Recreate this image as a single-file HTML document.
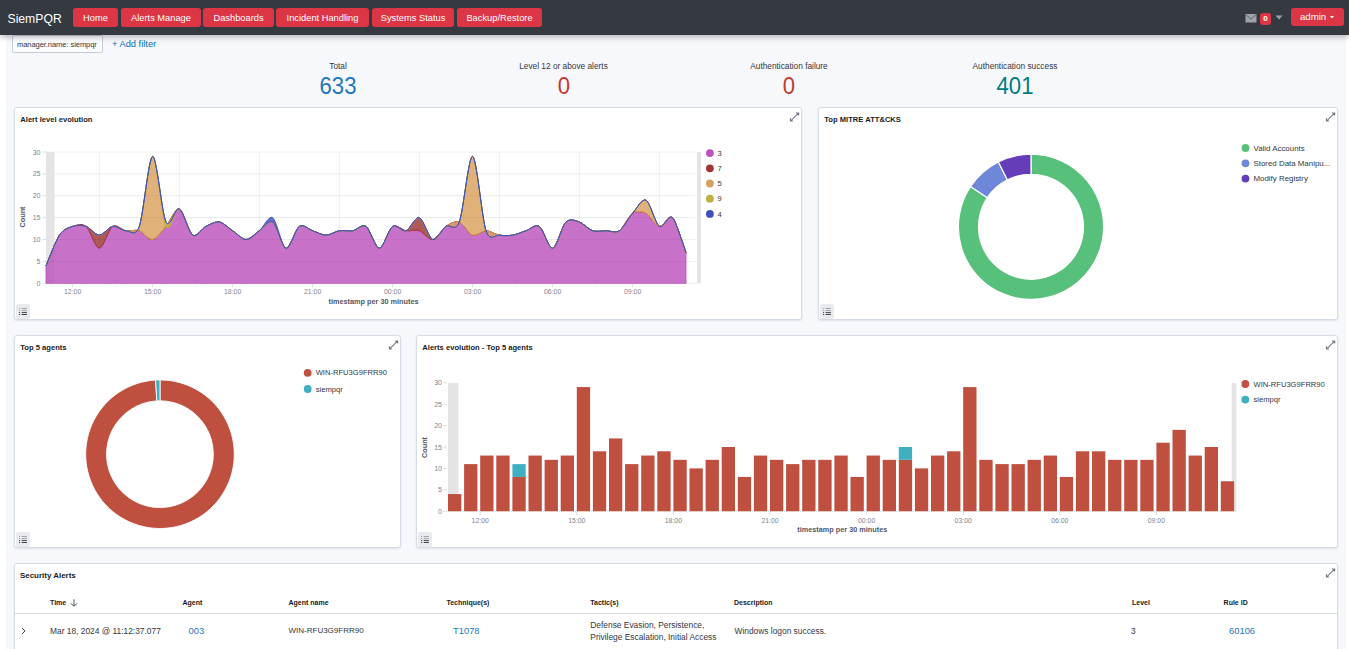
<!DOCTYPE html>
<html><head><meta charset="utf-8"><title>SiemPQR</title>
<style>
*{box-sizing:border-box;margin:0;padding:0}
html,body{width:1349px;height:649px;overflow:hidden;background:#fff;font-family:"Liberation Sans", sans-serif}
.abs{position:absolute}
.t{position:absolute;white-space:nowrap;line-height:1}
.nav{position:absolute;left:0;top:0;width:1349px;height:35px;background:#343a40;box-shadow:0 2px 6px rgba(0,0,0,.28);z-index:5}
.btn{position:absolute;top:8px;height:19px;background:#dc3545;border-radius:3px;color:#fff;font-size:9.3px;line-height:20.5px;text-align:center}
.page{position:absolute;left:6px;top:35px;width:1340px;height:614px;background:#f7f8fb}
.panel{position:absolute;background:#fff;border:1px solid #d6dce6;border-radius:3px;box-shadow:0 1px 2px rgba(152,162,179,.25)}
.ptitle{position:absolute;left:5.3px;top:8px;font-weight:bold;font-size:7.6px;color:#1a1c21;line-height:1;white-space:nowrap}
.tog{position:absolute;left:0.8px;bottom:0.5px;width:14.6px;height:14.6px;background:#e9eaed;border-radius:2.5px}
.lg{position:absolute;font-size:7.4px;color:#343741;line-height:1;white-space:nowrap}
.dot{position:absolute;width:8px;height:8px;border-radius:50%}
</style></head><body>

<div class="page"></div>
<div class="nav">
<div class="t" style="left:7.5px;top:12.5px;font-size:12.2px;color:#fff">SiemPQR</div>
<div class="btn" style="left:73px;width:45px">Home</div>
<div class="btn" style="left:121px;width:80px">Alerts Manage</div>
<div class="btn" style="left:203px;width:71px">Dashboards</div>
<div class="btn" style="left:276px;width:93px">Incident Handling</div>
<div class="btn" style="left:372px;width:82px">Systems Status</div>
<div class="btn" style="left:457px;width:85px">Backup/Restore</div>
<svg class="abs" style="left:1245px;top:13px" width="13" height="11" viewBox="0 0 13 11"><rect x="0.5" y="1" width="11" height="8.5" fill="#9ba1a8"/><path d="M0.5 1.5 L6 6 L11.5 1.5" stroke="#5d636b" stroke-width="0.9" fill="none"/></svg>
<div class="abs" style="left:1260px;top:13px;width:11px;height:12px;background:#dc3545;border-radius:3px;color:#fff;font-size:8px;font-weight:bold;line-height:12px;text-align:center">0</div>
<svg class="abs" style="left:1275px;top:15px" width="8" height="5" viewBox="0 0 8 5"><path d="M0.5 0.5 L7.5 0.5 L4 4.5 Z" fill="#9ba1a8"/></svg>
<div class="abs" style="left:1291px;top:8px;width:53px;height:18px;background:#dc3545;border-radius:3px;color:#fff;font-size:9.6px;line-height:18px;padding-left:9px">admin<svg style="position:absolute;left:38.5px;top:7.5px" width="4" height="2.5" viewBox="0 0 5 3"><path d="M0 0 L5 0 L2.5 3 Z" fill="#fff"/></svg></div>
</div>
<div class="abs" style="left:12px;top:35px;width:91px;height:18px;background:#fbfcfd;border:1px solid #c5ccd6;border-radius:2px"></div>
<div class="t" style="left:17px;top:40.5px;font-size:7.6px;color:#343741;letter-spacing:-0.1px">manager.name: siempqr</div>
<div class="t" style="left:112px;top:40.2px;font-size:9.3px;color:#0b6fb8">+ Add filter</div>
<div class="t" style="left:338px;top:62px;width:200px;margin-left:-100px;text-align:center;font-size:8.3px;color:#343741">Total</div>
<div class="t" style="left:338px;top:74px;width:200px;margin-left:-100px;text-align:center;font-size:23.8px;transform:scaleX(0.93);color:#1f76c0">633</div>
<div class="t" style="left:563.5px;top:62px;width:200px;margin-left:-100px;text-align:center;font-size:8.3px;color:#343741">Level 12 or above alerts</div>
<div class="t" style="left:563.5px;top:74px;width:200px;margin-left:-100px;text-align:center;font-size:23.8px;transform:scaleX(0.93);color:#c13b2e">0</div>
<div class="t" style="left:789px;top:62px;width:200px;margin-left:-100px;text-align:center;font-size:8.3px;color:#343741">Authentication failure</div>
<div class="t" style="left:789px;top:74px;width:200px;margin-left:-100px;text-align:center;font-size:23.8px;transform:scaleX(0.93);color:#c13b2e">0</div>
<div class="t" style="left:1015px;top:62px;width:200px;margin-left:-100px;text-align:center;font-size:8.3px;color:#343741">Authentication success</div>
<div class="t" style="left:1015px;top:74px;width:200px;margin-left:-100px;text-align:center;font-size:23.8px;transform:scaleX(0.93);color:#017d80">401</div>
<div class="panel" style="left:14px;top:107px;width:788px;height:213px">
<div class="ptitle">Alert level evolution</div>
<div class="tog"><svg class="abs" style="left:3px;top:4px" width="9" height="8" viewBox="0 0 9 8"><path d="M0 .5h1.1M2.7 .5h5.2M0 2.6h1.1M2.7 2.6h5.2" stroke="#9a9ea6" stroke-width="0.95"/><path d="M0 4.6h1.1M2.7 4.6h5.2M0 6.5h1.1M2.7 6.5h5.2" stroke="#3a3d44" stroke-width="0.95"/></svg></div>
</div>
<svg class="abs" style="left:789px;top:112px" width="11" height="11" viewBox="0 0 11 11"><path d="M2.2 8.4 L9.2 1.4 M7 0.9 L9.7 0.9 L9.7 3.6 M1.4 6.2 L1.4 9 L4 9" stroke="#747a84" stroke-width="1.05" fill="none"/></svg>
<div class="panel" style="left:818px;top:107px;width:520px;height:213px">
<div class="ptitle">Top MITRE ATT&amp;CKS</div>
<div class="tog"><svg class="abs" style="left:3px;top:4px" width="9" height="8" viewBox="0 0 9 8"><path d="M0 .5h1.1M2.7 .5h5.2M0 2.6h1.1M2.7 2.6h5.2" stroke="#9a9ea6" stroke-width="0.95"/><path d="M0 4.6h1.1M2.7 4.6h5.2M0 6.5h1.1M2.7 6.5h5.2" stroke="#3a3d44" stroke-width="0.95"/></svg></div>
</div>
<svg class="abs" style="left:1325px;top:112px" width="11" height="11" viewBox="0 0 11 11"><path d="M2.2 8.4 L9.2 1.4 M7 0.9 L9.7 0.9 L9.7 3.6 M1.4 6.2 L1.4 9 L4 9" stroke="#747a84" stroke-width="1.05" fill="none"/></svg>
<div class="panel" style="left:14px;top:335px;width:387px;height:213px">
<div class="ptitle">Top 5 agents</div>
<div class="tog"><svg class="abs" style="left:3px;top:4px" width="9" height="8" viewBox="0 0 9 8"><path d="M0 .5h1.1M2.7 .5h5.2M0 2.6h1.1M2.7 2.6h5.2" stroke="#9a9ea6" stroke-width="0.95"/><path d="M0 4.6h1.1M2.7 4.6h5.2M0 6.5h1.1M2.7 6.5h5.2" stroke="#3a3d44" stroke-width="0.95"/></svg></div>
</div>
<svg class="abs" style="left:388px;top:340px" width="11" height="11" viewBox="0 0 11 11"><path d="M2.2 8.4 L9.2 1.4 M7 0.9 L9.7 0.9 L9.7 3.6 M1.4 6.2 L1.4 9 L4 9" stroke="#747a84" stroke-width="1.05" fill="none"/></svg>
<div class="panel" style="left:416px;top:335px;width:922px;height:213px">
<div class="ptitle">Alerts evolution - Top 5 agents</div>
<div class="tog"><svg class="abs" style="left:3px;top:4px" width="9" height="8" viewBox="0 0 9 8"><path d="M0 .5h1.1M2.7 .5h5.2M0 2.6h1.1M2.7 2.6h5.2" stroke="#9a9ea6" stroke-width="0.95"/><path d="M0 4.6h1.1M2.7 4.6h5.2M0 6.5h1.1M2.7 6.5h5.2" stroke="#3a3d44" stroke-width="0.95"/></svg></div>
</div>
<svg class="abs" style="left:1325px;top:340px" width="11" height="11" viewBox="0 0 11 11"><path d="M2.2 8.4 L9.2 1.4 M7 0.9 L9.7 0.9 L9.7 3.6 M1.4 6.2 L1.4 9 L4 9" stroke="#747a84" stroke-width="1.05" fill="none"/></svg>
<div class="panel" style="left:14px;top:563px;width:1324px;height:110px">
<div class="ptitle" style="top:8.3px;left:5px;font-size:7.95px">Security Alerts</div>
<div class="abs" style="left:0;top:48.8px;width:1322px;height:1px;background:#d6dce6"></div>
</div>
<svg class="abs" style="left:1325px;top:568px" width="11" height="11" viewBox="0 0 11 11"><path d="M2.2 8.4 L9.2 1.4 M7 0.9 L9.7 0.9 L9.7 3.6 M1.4 6.2 L1.4 9 L4 9" stroke="#747a84" stroke-width="1.05" fill="none"/></svg>
<div class="t" style="left:50px;top:599px;font-size:7px;font-weight:bold;color:#1a1c21">Time</div>
<div class="t" style="left:182.5px;top:599px;font-size:7px;font-weight:bold;color:#1a1c21">Agent</div>
<div class="t" style="left:288.5px;top:599px;font-size:7px;font-weight:bold;color:#1a1c21">Agent name</div>
<div class="t" style="left:446.4px;top:599px;font-size:7px;font-weight:bold;color:#1a1c21">Technique(s)</div>
<div class="t" style="left:590.3px;top:599px;font-size:7px;font-weight:bold;color:#1a1c21">Tactic(s)</div>
<div class="t" style="left:734px;top:599px;font-size:7px;font-weight:bold;color:#1a1c21">Description</div>
<div class="t" style="left:1132px;top:599px;font-size:7px;font-weight:bold;color:#1a1c21">Level</div>
<div class="t" style="left:1223.6px;top:599px;font-size:7px;font-weight:bold;color:#1a1c21">Rule ID</div>
<svg class="abs" style="left:70px;top:598px" width="8" height="9" viewBox="0 0 8 9"><path d="M4 1.3V8M0.7 5.3L4 8.2L7.3 5.3" stroke="#4a4d55" stroke-width="0.95" fill="none"/></svg>
<svg class="abs" style="left:21px;top:627px" width="5" height="8" viewBox="0 0 5 8"><path d="M1 1L4 4L1 7" stroke="#343741" stroke-width="0.9" fill="none"/></svg>
<div class="t" style="left:50px;top:627px;font-size:8.4px;color:#343741">Mar 18, 2024 @ 11:12:37.077</div>
<div class="t" style="left:188.5px;top:626px;font-size:9.4px;color:#1f76c0">003</div>
<div class="t" style="left:288.5px;top:627px;font-size:8px;color:#343741">WIN-RFU3G9FRR90</div>
<div class="t" style="left:453px;top:626px;font-size:9.4px;color:#1f76c0">T1078</div>
<div class="t" style="left:590.3px;top:621px;font-size:8.4px;color:#343741">Defense Evasion, Persistence,</div>
<div class="t" style="left:590.3px;top:633px;font-size:8.4px;color:#343741">Privilege Escalation, Initial Access</div>
<div class="t" style="left:734.5px;top:627px;font-size:8.4px;color:#343741">Windows logon success.</div>
<div class="t" style="left:1131px;top:627px;font-size:8.4px;color:#343741">3</div>
<div class="t" style="left:1229px;top:626px;font-size:9.4px;color:#1f76c0">60106</div>
<svg class="abs" style="left:0;top:0" width="1349" height="649" viewBox="0 0 1349 649"><rect x="46" y="152" width="8.6" height="131.3" fill="#e4e4e4"/><rect x="697" y="152" width="4" height="131.3" fill="#e4e4e4"/><line x1="46" x2="697" y1="283.3" y2="283.3" stroke="#ececec" stroke-width="0.8"/><line x1="42.5" x2="46" y1="283.3" y2="283.3" stroke="#d0d0d0" stroke-width="0.7"/><text x="40.5" y="285.8" font-size="7" fill="#7d8491" text-anchor="end" font-family='"Liberation Sans", sans-serif'>0</text><line x1="46" x2="697" y1="261.42" y2="261.42" stroke="#ececec" stroke-width="0.8"/><line x1="42.5" x2="46" y1="261.42" y2="261.42" stroke="#d0d0d0" stroke-width="0.7"/><text x="40.5" y="263.92" font-size="7" fill="#7d8491" text-anchor="end" font-family='"Liberation Sans", sans-serif'>5</text><line x1="46" x2="697" y1="239.53" y2="239.53" stroke="#ececec" stroke-width="0.8"/><line x1="42.5" x2="46" y1="239.53" y2="239.53" stroke="#d0d0d0" stroke-width="0.7"/><text x="40.5" y="242.03" font-size="7" fill="#7d8491" text-anchor="end" font-family='"Liberation Sans", sans-serif'>10</text><line x1="46" x2="697" y1="217.65" y2="217.65" stroke="#ececec" stroke-width="0.8"/><line x1="42.5" x2="46" y1="217.65" y2="217.65" stroke="#d0d0d0" stroke-width="0.7"/><text x="40.5" y="220.15" font-size="7" fill="#7d8491" text-anchor="end" font-family='"Liberation Sans", sans-serif'>15</text><line x1="46" x2="697" y1="195.77" y2="195.77" stroke="#ececec" stroke-width="0.8"/><line x1="42.5" x2="46" y1="195.77" y2="195.77" stroke="#d0d0d0" stroke-width="0.7"/><text x="40.5" y="198.27" font-size="7" fill="#7d8491" text-anchor="end" font-family='"Liberation Sans", sans-serif'>20</text><line x1="46" x2="697" y1="173.88" y2="173.88" stroke="#ececec" stroke-width="0.8"/><line x1="42.5" x2="46" y1="173.88" y2="173.88" stroke="#d0d0d0" stroke-width="0.7"/><text x="40.5" y="176.38" font-size="7" fill="#7d8491" text-anchor="end" font-family='"Liberation Sans", sans-serif'>25</text><line x1="46" x2="697" y1="152" y2="152" stroke="#ececec" stroke-width="0.8"/><line x1="42.5" x2="46" y1="152" y2="152" stroke="#d0d0d0" stroke-width="0.7"/><text x="40.5" y="154.5" font-size="7" fill="#7d8491" text-anchor="end" font-family='"Liberation Sans", sans-serif'>30</text><line x1="99.33" x2="99.33" y1="152" y2="283.3" stroke="#ececec" stroke-width="0.8"/><line x1="179.33" x2="179.33" y1="152" y2="283.3" stroke="#ececec" stroke-width="0.8"/><line x1="259.33" x2="259.33" y1="152" y2="283.3" stroke="#ececec" stroke-width="0.8"/><line x1="339.33" x2="339.33" y1="152" y2="283.3" stroke="#ececec" stroke-width="0.8"/><line x1="419.32" x2="419.32" y1="152" y2="283.3" stroke="#ececec" stroke-width="0.8"/><line x1="499.32" x2="499.32" y1="152" y2="283.3" stroke="#ececec" stroke-width="0.8"/><line x1="579.32" x2="579.32" y1="152" y2="283.3" stroke="#ececec" stroke-width="0.8"/><line x1="659.32" x2="659.32" y1="152" y2="283.3" stroke="#ececec" stroke-width="0.8"/><line x1="72.67" x2="72.67" y1="283.5" y2="287.5" stroke="#d0d0d0" stroke-width="0.7"/><text x="72.67" y="294" font-size="6.9" fill="#7d8491" text-anchor="middle" font-family='"Liberation Sans", sans-serif'>12:00</text><line x1="152.66" x2="152.66" y1="283.5" y2="287.5" stroke="#d0d0d0" stroke-width="0.7"/><text x="152.66" y="294" font-size="6.9" fill="#7d8491" text-anchor="middle" font-family='"Liberation Sans", sans-serif'>15:00</text><line x1="232.66" x2="232.66" y1="283.5" y2="287.5" stroke="#d0d0d0" stroke-width="0.7"/><text x="232.66" y="294" font-size="6.9" fill="#7d8491" text-anchor="middle" font-family='"Liberation Sans", sans-serif'>18:00</text><line x1="312.66" x2="312.66" y1="283.5" y2="287.5" stroke="#d0d0d0" stroke-width="0.7"/><text x="312.66" y="294" font-size="6.9" fill="#7d8491" text-anchor="middle" font-family='"Liberation Sans", sans-serif'>21:00</text><line x1="392.66" x2="392.66" y1="283.5" y2="287.5" stroke="#d0d0d0" stroke-width="0.7"/><text x="392.66" y="294" font-size="6.9" fill="#7d8491" text-anchor="middle" font-family='"Liberation Sans", sans-serif'>00:00</text><line x1="472.66" x2="472.66" y1="283.5" y2="287.5" stroke="#d0d0d0" stroke-width="0.7"/><text x="472.66" y="294" font-size="6.9" fill="#7d8491" text-anchor="middle" font-family='"Liberation Sans", sans-serif'>03:00</text><line x1="552.65" x2="552.65" y1="283.5" y2="287.5" stroke="#d0d0d0" stroke-width="0.7"/><text x="552.65" y="294" font-size="6.9" fill="#7d8491" text-anchor="middle" font-family='"Liberation Sans", sans-serif'>06:00</text><line x1="632.65" x2="632.65" y1="283.5" y2="287.5" stroke="#d0d0d0" stroke-width="0.7"/><text x="632.65" y="294" font-size="6.9" fill="#7d8491" text-anchor="middle" font-family='"Liberation Sans", sans-serif'>09:00</text><text x="373.5" y="304.3" font-size="7.3" font-weight="bold" fill="#535966" text-anchor="middle" font-family='"Liberation Sans", sans-serif'>timestamp per 30 minutes</text><text transform="translate(25,217) rotate(-90)" font-size="7.3" font-weight="bold" fill="#535966" text-anchor="middle" font-family='"Liberation Sans", sans-serif'>Count</text><path d="M46,265.79Q56.67,239.1,59.33,235.16C63.33,229.25,68.67,227.72,72.67,226.4S82,223.12,86,226.4S95.33,248.29,99.33,248.29S108.67,229.03,112.67,226.4S122,230.12,126,230.78S135.33,229.47,139.33,230.78S148.66,240.19,152.66,239.53S162,231,166,226.4S175.33,207.58,179.33,208.9S188.66,232.53,192.66,235.16S202,228.37,206,226.4S215.33,221.37,219.33,222.03S228.66,228.15,232.66,230.78S242,239.53,246,239.53S255.33,233.41,259.33,230.78S268.66,219.4,272.66,222.03S281.99,247.63,285.99,248.29S295.33,229.03,299.33,226.4S308.66,229.47,312.66,230.78S321.99,235.16,325.99,235.16S335.33,231.44,339.33,230.78S348.66,231.44,352.66,230.78S361.99,223.78,365.99,226.4S375.33,248.29,379.32,248.29S388.66,229.03,392.66,226.4S401.99,230.12,405.99,230.78S415.32,229.47,419.32,230.78S428.66,240.19,432.66,239.53S441.99,229.03,445.99,226.4S455.32,220.71,459.32,222.03S468.66,233.84,472.66,235.16S481.99,230.78,485.99,230.78S495.32,234.5,499.32,235.16S508.66,235.81,512.65,235.16S521.99,232.09,525.99,230.78S535.32,223.78,539.32,226.4S548.65,248.94,552.65,248.29S561.99,225.97,565.99,222.03S575.32,220.71,579.32,222.03S588.65,229.47,592.65,230.78S601.99,230.78,605.99,230.78S615.32,233.41,619.32,230.78S628.65,215.9,632.65,213.27S641.99,211.3,645.99,213.27S655.32,225.75,659.32,226.4S668.65,213.71,672.65,217.65Q675.32,220.28,685.98,252.66L685.98,283.3Q675.32,283.3,672.65,283.3C668.65,283.3,663.32,283.3,659.32,283.3S649.98,283.3,645.99,283.3S636.65,283.3,632.65,283.3S623.32,283.3,619.32,283.3S609.99,283.3,605.99,283.3S596.65,283.3,592.65,283.3S583.32,283.3,579.32,283.3S569.99,283.3,565.99,283.3S556.65,283.3,552.65,283.3S543.32,283.3,539.32,283.3S529.99,283.3,525.99,283.3S516.65,283.3,512.65,283.3S503.32,283.3,499.32,283.3S489.99,283.3,485.99,283.3S476.66,283.3,472.66,283.3S463.32,283.3,459.32,283.3S449.99,283.3,445.99,283.3S436.66,283.3,432.66,283.3S423.32,283.3,419.32,283.3S409.99,283.3,405.99,283.3S396.66,283.3,392.66,283.3S383.32,283.3,379.32,283.3S369.99,283.3,365.99,283.3S356.66,283.3,352.66,283.3S343.33,283.3,339.33,283.3S329.99,283.3,325.99,283.3S316.66,283.3,312.66,283.3S303.33,283.3,299.33,283.3S289.99,283.3,285.99,283.3S276.66,283.3,272.66,283.3S263.33,283.3,259.33,283.3S249.99,283.3,246,283.3S236.66,283.3,232.66,283.3S223.33,283.3,219.33,283.3S210,283.3,206,283.3S196.66,283.3,192.66,283.3S183.33,283.3,179.33,283.3S170,283.3,166,283.3S156.66,283.3,152.66,283.3S143.33,283.3,139.33,283.3S130,283.3,126,283.3S116.66,283.3,112.67,283.3S103.33,283.3,99.33,283.3S90,283.3,86,283.3S76.67,283.3,72.67,283.3S63.33,283.3,59.33,283.3Q56.67,283.3,46,283.3Z" fill="#bc52bc" fill-opacity="0.82" stroke="#bc52bc" stroke-width="0.9"/><path d="M46,265.79Q56.67,239.1,59.33,235.16C63.33,229.25,68.67,227.72,72.67,226.4S82,225.09,86,226.4S95.33,235.16,99.33,235.16S108.67,227.06,112.67,226.4S122,230.12,126,230.78S135.33,229.47,139.33,230.78S148.66,240.19,152.66,239.53S162,231,166,226.4S175.33,207.58,179.33,208.9S188.66,232.53,192.66,235.16S202,228.37,206,226.4S215.33,221.37,219.33,222.03S228.66,228.15,232.66,230.78S242,239.53,246,239.53S255.33,233.41,259.33,230.78S268.66,219.4,272.66,222.03S281.99,247.63,285.99,248.29S295.33,229.03,299.33,226.4S308.66,229.47,312.66,230.78S321.99,235.16,325.99,235.16S335.33,231.44,339.33,230.78S348.66,231.44,352.66,230.78S361.99,223.78,365.99,226.4S375.33,248.29,379.32,248.29S388.66,229.03,392.66,226.4S401.99,232.09,405.99,230.78S415.32,216.34,419.32,217.65S428.66,238.22,432.66,239.53S441.99,229.03,445.99,226.4S455.32,220.71,459.32,222.03S468.66,233.84,472.66,235.16S481.99,230.78,485.99,230.78S495.32,234.5,499.32,235.16S508.66,235.81,512.65,235.16S521.99,232.09,525.99,230.78S535.32,223.78,539.32,226.4S548.65,248.94,552.65,248.29S561.99,225.97,565.99,222.03S575.32,220.71,579.32,222.03S588.65,229.47,592.65,230.78S601.99,230.78,605.99,230.78S615.32,233.41,619.32,230.78S628.65,215.9,632.65,213.27S641.99,211.3,645.99,213.27S655.32,225.75,659.32,226.4S668.65,213.71,672.65,217.65Q675.32,220.28,685.98,252.66L685.98,252.66Q675.32,220.28,672.65,217.65C668.65,213.71,663.32,227.06,659.32,226.4S649.98,215.24,645.99,213.27S636.65,210.65,632.65,213.27S623.32,228.15,619.32,230.78S609.99,230.78,605.99,230.78S596.65,232.09,592.65,230.78S583.32,223.34,579.32,222.03S569.99,218.09,565.99,222.03S556.65,247.63,552.65,248.29S543.32,229.03,539.32,226.4S529.99,229.47,525.99,230.78S516.65,234.5,512.65,235.16S503.32,235.81,499.32,235.16S489.99,230.78,485.99,230.78S476.66,236.47,472.66,235.16S463.32,223.34,459.32,222.03S449.99,223.78,445.99,226.4S436.66,238.88,432.66,239.53S423.32,232.09,419.32,230.78S409.99,231.44,405.99,230.78S396.66,223.78,392.66,226.4S383.32,248.29,379.32,248.29S369.99,229.03,365.99,226.4S356.66,230.12,352.66,230.78S343.33,230.12,339.33,230.78S329.99,235.16,325.99,235.16S316.66,232.09,312.66,230.78S303.33,223.78,299.33,226.4S289.99,248.94,285.99,248.29S276.66,224.65,272.66,222.03S263.33,228.15,259.33,230.78S249.99,239.53,246,239.53S236.66,233.41,232.66,230.78S223.33,222.68,219.33,222.03S210,224.43,206,226.4S196.66,237.78,192.66,235.16S183.33,210.21,179.33,208.9S170,221.81,166,226.4S156.66,238.88,152.66,239.53S143.33,232.09,139.33,230.78S130,231.44,126,230.78S116.66,223.78,112.67,226.4S103.33,248.29,99.33,248.29S90,229.69,86,226.4S76.67,225.09,72.67,226.4S63.33,229.25,59.33,235.16Q56.67,239.1,46,265.79Z" fill="#9e3533" fill-opacity="0.82" stroke="#9e3533" stroke-width="0.9"/><path d="M46,265.79Q56.67,239.1,59.33,235.16C63.33,229.25,68.67,227.72,72.67,226.4S82,225.09,86,226.4S95.33,235.16,99.33,235.16S108.67,227.06,112.67,226.4S122,230.78,126,230.78S135.33,237.56,139.33,226.4S148.66,156.38,152.66,156.38S162,218.53,166,226.4S175.33,207.58,179.33,208.9S188.66,232.53,192.66,235.16S202,228.37,206,226.4S215.33,221.37,219.33,222.03S228.66,228.15,232.66,230.78S242,239.53,246,239.53S255.33,233.41,259.33,230.78S268.66,219.4,272.66,222.03S281.99,247.63,285.99,248.29S295.33,229.03,299.33,226.4S308.66,229.47,312.66,230.78S321.99,235.16,325.99,235.16S335.33,231.44,339.33,230.78S348.66,231.44,352.66,230.78S361.99,223.78,365.99,226.4S375.33,248.29,379.32,248.29S388.66,229.03,392.66,226.4S401.99,232.09,405.99,230.78S415.32,216.34,419.32,217.65S428.66,238.22,432.66,239.53S441.99,229.03,445.99,226.4S455.32,232.53,459.32,222.03S468.66,155.06,472.66,156.38S481.99,218.96,485.99,230.78S495.32,234.5,499.32,235.16S508.66,235.81,512.65,235.16S521.99,232.09,525.99,230.78S535.32,223.78,539.32,226.4S548.65,248.94,552.65,248.29S561.99,225.97,565.99,222.03S575.32,220.71,579.32,222.03S588.65,229.47,592.65,230.78S601.99,230.78,605.99,230.78S615.32,233.41,619.32,230.78S628.65,217.87,632.65,213.27S641.99,198.17,645.99,200.14S655.32,223.78,659.32,226.4S668.65,213.71,672.65,217.65Q675.32,220.28,685.98,252.66L685.98,252.66Q675.32,220.28,672.65,217.65C668.65,213.71,663.32,227.06,659.32,226.4S649.98,215.24,645.99,213.27S636.65,210.65,632.65,213.27S623.32,228.15,619.32,230.78S609.99,230.78,605.99,230.78S596.65,232.09,592.65,230.78S583.32,223.34,579.32,222.03S569.99,218.09,565.99,222.03S556.65,247.63,552.65,248.29S543.32,229.03,539.32,226.4S529.99,229.47,525.99,230.78S516.65,234.5,512.65,235.16S503.32,235.81,499.32,235.16S489.99,230.78,485.99,230.78S476.66,236.47,472.66,235.16S463.32,223.34,459.32,222.03S449.99,223.78,445.99,226.4S436.66,240.85,432.66,239.53S423.32,218.96,419.32,217.65S409.99,229.47,405.99,230.78S396.66,223.78,392.66,226.4S383.32,248.29,379.32,248.29S369.99,229.03,365.99,226.4S356.66,230.12,352.66,230.78S343.33,230.12,339.33,230.78S329.99,235.16,325.99,235.16S316.66,232.09,312.66,230.78S303.33,223.78,299.33,226.4S289.99,248.94,285.99,248.29S276.66,224.65,272.66,222.03S263.33,228.15,259.33,230.78S249.99,239.53,246,239.53S236.66,233.41,232.66,230.78S223.33,222.68,219.33,222.03S210,224.43,206,226.4S196.66,237.78,192.66,235.16S183.33,210.21,179.33,208.9S170,221.81,166,226.4S156.66,238.88,152.66,239.53S143.33,232.09,139.33,230.78S130,231.44,126,230.78S116.66,225.75,112.67,226.4S103.33,235.16,99.33,235.16S90,227.72,86,226.4S76.67,225.09,72.67,226.4S63.33,229.25,59.33,235.16Q56.67,239.1,46,265.79Z" fill="#daa05d" fill-opacity="0.82" stroke="#daa05d" stroke-width="0.9"/><path d="M46,265.79Q56.67,239.1,59.33,235.16C63.33,229.25,68.67,227.72,72.67,226.4S82,225.09,86,226.4S95.33,235.16,99.33,235.16S108.67,227.06,112.67,226.4S122,230.78,126,230.78S135.33,237.56,139.33,226.4S148.66,157.03,152.66,156.38S162,214.15,166,222.03S175.33,206.93,179.33,208.9S188.66,232.53,192.66,235.16S202,228.37,206,226.4S215.33,221.37,219.33,222.03S228.66,228.15,232.66,230.78S242,239.53,246,239.53S255.33,233.41,259.33,230.78S268.66,219.4,272.66,222.03S281.99,247.63,285.99,248.29S295.33,229.03,299.33,226.4S308.66,229.47,312.66,230.78S321.99,235.16,325.99,235.16S335.33,231.44,339.33,230.78S348.66,231.44,352.66,230.78S361.99,223.78,365.99,226.4S375.33,248.29,379.32,248.29S388.66,229.03,392.66,226.4S401.99,232.09,405.99,230.78S415.32,216.34,419.32,217.65S428.66,238.22,432.66,239.53S441.99,229.03,445.99,226.4S455.32,232.53,459.32,222.03S468.66,155.06,472.66,156.38S481.99,218.96,485.99,230.78S495.32,234.5,499.32,235.16S508.66,235.81,512.65,235.16S521.99,232.09,525.99,230.78S535.32,223.78,539.32,226.4S548.65,248.94,552.65,248.29S561.99,225.97,565.99,222.03S575.32,220.71,579.32,222.03S588.65,229.47,592.65,230.78S601.99,230.78,605.99,230.78S615.32,233.41,619.32,230.78S628.65,217.87,632.65,213.27S641.99,198.17,645.99,200.14S655.32,223.78,659.32,226.4S668.65,213.71,672.65,217.65Q675.32,220.28,685.98,252.66L685.98,252.66Q675.32,220.28,672.65,217.65C668.65,213.71,663.32,229.03,659.32,226.4S649.98,202.11,645.99,200.14S636.65,208.68,632.65,213.27S623.32,228.15,619.32,230.78S609.99,230.78,605.99,230.78S596.65,232.09,592.65,230.78S583.32,223.34,579.32,222.03S569.99,218.09,565.99,222.03S556.65,247.63,552.65,248.29S543.32,229.03,539.32,226.4S529.99,229.47,525.99,230.78S516.65,234.5,512.65,235.16S503.32,235.81,499.32,235.16S489.99,242.6,485.99,230.78S476.66,157.69,472.66,156.38S463.32,211.52,459.32,222.03S449.99,223.78,445.99,226.4S436.66,240.85,432.66,239.53S423.32,218.96,419.32,217.65S409.99,229.47,405.99,230.78S396.66,223.78,392.66,226.4S383.32,248.29,379.32,248.29S369.99,229.03,365.99,226.4S356.66,230.12,352.66,230.78S343.33,230.12,339.33,230.78S329.99,235.16,325.99,235.16S316.66,232.09,312.66,230.78S303.33,223.78,299.33,226.4S289.99,248.94,285.99,248.29S276.66,224.65,272.66,222.03S263.33,228.15,259.33,230.78S249.99,239.53,246,239.53S236.66,233.41,232.66,230.78S223.33,222.68,219.33,222.03S210,224.43,206,226.4S196.66,237.78,192.66,235.16S183.33,210.21,179.33,208.9S170,234.28,166,226.4S156.66,156.38,152.66,156.38S143.33,215.24,139.33,226.4S130,230.78,126,230.78S116.66,225.75,112.67,226.4S103.33,235.16,99.33,235.16S90,227.72,86,226.4S76.67,225.09,72.67,226.4S63.33,229.25,59.33,235.16Q56.67,239.1,46,265.79Z" fill="#bfaf40" fill-opacity="0.82" stroke="#bfaf40" stroke-width="0.9"/><path d="M46,265.79Q56.67,239.1,59.33,235.16C63.33,229.25,68.67,227.72,72.67,226.4S82,225.09,86,226.4S95.33,235.16,99.33,235.16S108.67,227.06,112.67,226.4S122,230.78,126,230.78S135.33,237.56,139.33,226.4S148.66,157.03,152.66,156.38S162,214.15,166,222.03S175.33,206.93,179.33,208.9S188.66,232.53,192.66,235.16S202,228.37,206,226.4S215.33,221.37,219.33,222.03S228.66,228.15,232.66,230.78S242,239.53,246,239.53S255.33,234.06,259.33,230.78S268.66,215.02,272.66,217.65S281.99,246.97,285.99,248.29S295.33,229.03,299.33,226.4S308.66,229.47,312.66,230.78S321.99,235.16,325.99,235.16S335.33,231.44,339.33,230.78S348.66,231.44,352.66,230.78S361.99,223.78,365.99,226.4S375.33,248.29,379.32,248.29S388.66,229.03,392.66,226.4S401.99,232.09,405.99,230.78S415.32,216.34,419.32,217.65S428.66,238.22,432.66,239.53S441.99,229.03,445.99,226.4S455.32,232.53,459.32,222.03S468.66,155.06,472.66,156.38S481.99,218.96,485.99,230.78S495.32,234.5,499.32,235.16S508.66,235.81,512.65,235.16S521.99,232.09,525.99,230.78S535.32,223.78,539.32,226.4S548.65,248.94,552.65,248.29S561.99,225.97,565.99,222.03S575.32,220.71,579.32,222.03S588.65,229.47,592.65,230.78S601.99,230.78,605.99,230.78S615.32,233.41,619.32,230.78S628.65,217.87,632.65,213.27S641.99,198.17,645.99,200.14S655.32,223.78,659.32,226.4S668.65,213.71,672.65,217.65Q675.32,220.28,685.98,252.66L685.98,252.66Q675.32,220.28,672.65,217.65C668.65,213.71,663.32,229.03,659.32,226.4S649.98,202.11,645.99,200.14S636.65,208.68,632.65,213.27S623.32,228.15,619.32,230.78S609.99,230.78,605.99,230.78S596.65,232.09,592.65,230.78S583.32,223.34,579.32,222.03S569.99,218.09,565.99,222.03S556.65,247.63,552.65,248.29S543.32,229.03,539.32,226.4S529.99,229.47,525.99,230.78S516.65,234.5,512.65,235.16S503.32,235.81,499.32,235.16S489.99,242.6,485.99,230.78S476.66,157.69,472.66,156.38S463.32,211.52,459.32,222.03S449.99,223.78,445.99,226.4S436.66,240.85,432.66,239.53S423.32,218.96,419.32,217.65S409.99,229.47,405.99,230.78S396.66,223.78,392.66,226.4S383.32,248.29,379.32,248.29S369.99,229.03,365.99,226.4S356.66,230.12,352.66,230.78S343.33,230.12,339.33,230.78S329.99,235.16,325.99,235.16S316.66,232.09,312.66,230.78S303.33,223.78,299.33,226.4S289.99,248.94,285.99,248.29S276.66,224.65,272.66,222.03S263.33,228.15,259.33,230.78S249.99,239.53,246,239.53S236.66,233.41,232.66,230.78S223.33,222.68,219.33,222.03S210,224.43,206,226.4S196.66,237.78,192.66,235.16S183.33,210.87,179.33,208.9S170,229.9,166,222.03S156.66,155.72,152.66,156.38S143.33,215.24,139.33,226.4S130,230.78,126,230.78S116.66,225.75,112.67,226.4S103.33,235.16,99.33,235.16S90,227.72,86,226.4S76.67,225.09,72.67,226.4S63.33,229.25,59.33,235.16Q56.67,239.1,46,265.79Z" fill="#4050bf" fill-opacity="0.82" stroke="#4050bf" stroke-width="0.9"/><line x1="46" x2="686" y1="261.42" y2="261.42" stroke="#000" stroke-opacity="0.04" stroke-width="0.8"/><line x1="46" x2="686" y1="239.53" y2="239.53" stroke="#000" stroke-opacity="0.04" stroke-width="0.8"/><line x1="46" x2="686" y1="217.65" y2="217.65" stroke="#000" stroke-opacity="0.04" stroke-width="0.8"/><line x1="46" x2="686" y1="195.77" y2="195.77" stroke="#000" stroke-opacity="0.04" stroke-width="0.8"/><line x1="46" x2="686" y1="173.88" y2="173.88" stroke="#000" stroke-opacity="0.04" stroke-width="0.8"/><circle cx="709.9" cy="153.1" r="3.9" fill="#bc52bc"/><text x="717.5" y="155.8" font-size="7.6" fill="#343741" font-family='"Liberation Sans", sans-serif'>3</text><circle cx="709.9" cy="168.3" r="3.9" fill="#9e3533"/><text x="717.5" y="171" font-size="7.6" fill="#343741" font-family='"Liberation Sans", sans-serif'>7</text><circle cx="709.9" cy="183.5" r="3.9" fill="#daa05d"/><text x="717.5" y="186.2" font-size="7.6" fill="#343741" font-family='"Liberation Sans", sans-serif'>5</text><circle cx="709.9" cy="198.7" r="3.9" fill="#bfaf40"/><text x="717.5" y="201.4" font-size="7.6" fill="#343741" font-family='"Liberation Sans", sans-serif'>9</text><circle cx="709.9" cy="213.9" r="3.9" fill="#4050bf"/><text x="717.5" y="216.6" font-size="7.6" fill="#343741" font-family='"Liberation Sans", sans-serif'>4</text><path d="M1031,154.2A72.6,72.6 0 1 1 970.6,186.52L987.32,197.67A52.5,52.5 0 1 0 1031,174.3Z" fill="#57c17b" stroke="#fff" stroke-width="1.2"/><path d="M970.6,186.52A72.6,72.6 0 0 1 998.38,161.94L1007.41,179.9A52.5,52.5 0 0 0 987.32,197.67Z" fill="#6f87d8" stroke="#fff" stroke-width="1.2"/><path d="M998.38,161.94A72.6,72.6 0 0 1 1031,154.2L1031,174.3A52.5,52.5 0 0 0 1007.41,179.9Z" fill="#663db8" stroke="#fff" stroke-width="1.2"/><circle cx="1245.5" cy="148" r="3.9" fill="#57c17b"/><text x="1253.5" y="150.8" font-size="7.9" fill="#343741" font-family='"Liberation Sans", sans-serif'>Valid Accounts</text><circle cx="1245.5" cy="163.3" r="3.9" fill="#6f87d8"/><text x="1253.5" y="166.1" font-size="7.9" fill="#343741" font-family='"Liberation Sans", sans-serif'>Stored Data Manipu...</text><circle cx="1245.5" cy="178.6" r="3.9" fill="#663db8"/><text x="1253.5" y="181.4" font-size="7.9" fill="#343741" font-family='"Liberation Sans", sans-serif'>Modify Registry</text><path d="M160,379.9A74.3,74.3 0 1 1 155.59,380.03L156.83,400.89A53.4,53.4 0 1 0 160,400.8Z" fill="#bf4f3f" stroke="#fff" stroke-width="0.9"/><path d="M155.59,380.03A74.3,74.3 0 0 1 160,379.9L160,400.8A53.4,53.4 0 0 0 156.83,400.89Z" fill="#3fb0c0" stroke="#fff" stroke-width="0.9"/><circle cx="307.7" cy="372.8" r="3.9" fill="#bf4f3f"/><text x="315.7" y="375.4" font-size="7.6" fill="#343741" font-family='"Liberation Sans", sans-serif'>WIN-RFU3G9FRR90</text><circle cx="307.7" cy="389" r="3.9" fill="#3fb0c0"/><text x="315.7" y="391.6" font-size="7.6" fill="#343741" font-family='"Liberation Sans", sans-serif'>siempqr</text><rect x="448" y="383" width="10.4" height="128.2" fill="#e4e4e4"/><rect x="1231.6" y="383" width="4.8" height="128.2" fill="#e4e4e4"/><line x1="443" x2="447" y1="511.2" y2="511.2" stroke="#d0d0d0" stroke-width="0.7"/><text x="442" y="513.7" font-size="7" fill="#7d8491" text-anchor="end" font-family='"Liberation Sans", sans-serif'>0</text><line x1="443" x2="447" y1="489.8" y2="489.8" stroke="#d0d0d0" stroke-width="0.7"/><text x="442" y="492.3" font-size="7" fill="#7d8491" text-anchor="end" font-family='"Liberation Sans", sans-serif'>5</text><line x1="443" x2="447" y1="468.4" y2="468.4" stroke="#d0d0d0" stroke-width="0.7"/><text x="442" y="470.9" font-size="7" fill="#7d8491" text-anchor="end" font-family='"Liberation Sans", sans-serif'>10</text><line x1="443" x2="447" y1="447" y2="447" stroke="#d0d0d0" stroke-width="0.7"/><text x="442" y="449.5" font-size="7" fill="#7d8491" text-anchor="end" font-family='"Liberation Sans", sans-serif'>15</text><line x1="443" x2="447" y1="425.6" y2="425.6" stroke="#d0d0d0" stroke-width="0.7"/><text x="442" y="428.1" font-size="7" fill="#7d8491" text-anchor="end" font-family='"Liberation Sans", sans-serif'>20</text><line x1="443" x2="447" y1="404.2" y2="404.2" stroke="#d0d0d0" stroke-width="0.7"/><text x="442" y="406.7" font-size="7" fill="#7d8491" text-anchor="end" font-family='"Liberation Sans", sans-serif'>25</text><line x1="443" x2="447" y1="382.8" y2="382.8" stroke="#d0d0d0" stroke-width="0.7"/><text x="442" y="385.3" font-size="7" fill="#7d8491" text-anchor="end" font-family='"Liberation Sans", sans-serif'>30</text><line x1="447" x2="1236" y1="511.5" y2="511.5" stroke="#ddd" stroke-width="0.6"/><rect x="448" y="494.08" width="13.3" height="17.12" fill="#bf4f3f"/><rect x="464.1" y="464.12" width="13.3" height="47.08" fill="#bf4f3f"/><rect x="480.2" y="455.56" width="13.3" height="55.64" fill="#bf4f3f"/><rect x="496.3" y="455.56" width="13.3" height="55.64" fill="#bf4f3f"/><rect x="512.4" y="476.96" width="13.3" height="34.24" fill="#bf4f3f"/><rect x="512.4" y="464.12" width="13.3" height="12.84" fill="#3fb0c0"/><rect x="528.5" y="455.56" width="13.3" height="55.64" fill="#bf4f3f"/><rect x="544.6" y="459.84" width="13.3" height="51.36" fill="#bf4f3f"/><rect x="560.7" y="455.56" width="13.3" height="55.64" fill="#bf4f3f"/><rect x="576.8" y="387.08" width="13.3" height="124.12" fill="#bf4f3f"/><rect x="592.9" y="451.28" width="13.3" height="59.92" fill="#bf4f3f"/><rect x="609" y="438.44" width="13.3" height="72.76" fill="#bf4f3f"/><rect x="625.1" y="464.12" width="13.3" height="47.08" fill="#bf4f3f"/><rect x="641.2" y="455.56" width="13.3" height="55.64" fill="#bf4f3f"/><rect x="657.3" y="451.28" width="13.3" height="59.92" fill="#bf4f3f"/><rect x="673.4" y="459.84" width="13.3" height="51.36" fill="#bf4f3f"/><rect x="689.5" y="468.4" width="13.3" height="42.8" fill="#bf4f3f"/><rect x="705.6" y="459.84" width="13.3" height="51.36" fill="#bf4f3f"/><rect x="721.7" y="447" width="13.3" height="64.2" fill="#bf4f3f"/><rect x="737.8" y="476.96" width="13.3" height="34.24" fill="#bf4f3f"/><rect x="753.9" y="455.56" width="13.3" height="55.64" fill="#bf4f3f"/><rect x="770" y="459.84" width="13.3" height="51.36" fill="#bf4f3f"/><rect x="786.1" y="464.12" width="13.3" height="47.08" fill="#bf4f3f"/><rect x="802.2" y="459.84" width="13.3" height="51.36" fill="#bf4f3f"/><rect x="818.3" y="459.84" width="13.3" height="51.36" fill="#bf4f3f"/><rect x="834.4" y="455.56" width="13.3" height="55.64" fill="#bf4f3f"/><rect x="850.5" y="476.96" width="13.3" height="34.24" fill="#bf4f3f"/><rect x="866.6" y="455.56" width="13.3" height="55.64" fill="#bf4f3f"/><rect x="882.7" y="459.84" width="13.3" height="51.36" fill="#bf4f3f"/><rect x="898.8" y="459.84" width="13.3" height="51.36" fill="#bf4f3f"/><rect x="898.8" y="447" width="13.3" height="12.84" fill="#3fb0c0"/><rect x="914.9" y="468.4" width="13.3" height="42.8" fill="#bf4f3f"/><rect x="931" y="455.56" width="13.3" height="55.64" fill="#bf4f3f"/><rect x="947.1" y="451.28" width="13.3" height="59.92" fill="#bf4f3f"/><rect x="963.2" y="387.08" width="13.3" height="124.12" fill="#bf4f3f"/><rect x="979.3" y="459.84" width="13.3" height="51.36" fill="#bf4f3f"/><rect x="995.4" y="464.12" width="13.3" height="47.08" fill="#bf4f3f"/><rect x="1011.5" y="464.12" width="13.3" height="47.08" fill="#bf4f3f"/><rect x="1027.6" y="459.84" width="13.3" height="51.36" fill="#bf4f3f"/><rect x="1043.7" y="455.56" width="13.3" height="55.64" fill="#bf4f3f"/><rect x="1059.8" y="476.96" width="13.3" height="34.24" fill="#bf4f3f"/><rect x="1075.9" y="451.28" width="13.3" height="59.92" fill="#bf4f3f"/><rect x="1092" y="451.28" width="13.3" height="59.92" fill="#bf4f3f"/><rect x="1108.1" y="459.84" width="13.3" height="51.36" fill="#bf4f3f"/><rect x="1124.2" y="459.84" width="13.3" height="51.36" fill="#bf4f3f"/><rect x="1140.3" y="459.84" width="13.3" height="51.36" fill="#bf4f3f"/><rect x="1156.4" y="442.72" width="13.3" height="68.48" fill="#bf4f3f"/><rect x="1172.5" y="429.88" width="13.3" height="81.32" fill="#bf4f3f"/><rect x="1188.6" y="455.56" width="13.3" height="55.64" fill="#bf4f3f"/><rect x="1204.7" y="447" width="13.3" height="64.2" fill="#bf4f3f"/><rect x="1220.8" y="481.24" width="13.3" height="29.96" fill="#bf4f3f"/><line x1="480.2" x2="480.2" y1="511.5" y2="515" stroke="#d0d0d0" stroke-width="0.7"/><text x="480.2" y="522.5" font-size="6.9" fill="#7d8491" text-anchor="middle" font-family='"Liberation Sans", sans-serif'>12:00</text><line x1="576.8" x2="576.8" y1="511.5" y2="515" stroke="#d0d0d0" stroke-width="0.7"/><text x="576.8" y="522.5" font-size="6.9" fill="#7d8491" text-anchor="middle" font-family='"Liberation Sans", sans-serif'>15:00</text><line x1="673.4" x2="673.4" y1="511.5" y2="515" stroke="#d0d0d0" stroke-width="0.7"/><text x="673.4" y="522.5" font-size="6.9" fill="#7d8491" text-anchor="middle" font-family='"Liberation Sans", sans-serif'>18:00</text><line x1="770" x2="770" y1="511.5" y2="515" stroke="#d0d0d0" stroke-width="0.7"/><text x="770" y="522.5" font-size="6.9" fill="#7d8491" text-anchor="middle" font-family='"Liberation Sans", sans-serif'>21:00</text><line x1="866.6" x2="866.6" y1="511.5" y2="515" stroke="#d0d0d0" stroke-width="0.7"/><text x="866.6" y="522.5" font-size="6.9" fill="#7d8491" text-anchor="middle" font-family='"Liberation Sans", sans-serif'>00:00</text><line x1="963.2" x2="963.2" y1="511.5" y2="515" stroke="#d0d0d0" stroke-width="0.7"/><text x="963.2" y="522.5" font-size="6.9" fill="#7d8491" text-anchor="middle" font-family='"Liberation Sans", sans-serif'>03:00</text><line x1="1059.8" x2="1059.8" y1="511.5" y2="515" stroke="#d0d0d0" stroke-width="0.7"/><text x="1059.8" y="522.5" font-size="6.9" fill="#7d8491" text-anchor="middle" font-family='"Liberation Sans", sans-serif'>06:00</text><line x1="1156.4" x2="1156.4" y1="511.5" y2="515" stroke="#d0d0d0" stroke-width="0.7"/><text x="1156.4" y="522.5" font-size="6.9" fill="#7d8491" text-anchor="middle" font-family='"Liberation Sans", sans-serif'>09:00</text><text x="842.3" y="532.3" font-size="7.3" font-weight="bold" fill="#535966" text-anchor="middle" font-family='"Liberation Sans", sans-serif'>timestamp per 30 minutes</text><text transform="translate(426.5,447.5) rotate(-90)" font-size="7.3" font-weight="bold" fill="#535966" text-anchor="middle" font-family='"Liberation Sans", sans-serif'>Count</text><circle cx="1245.3" cy="384" r="3.9" fill="#bf4f3f"/><text x="1253.5" y="386.6" font-size="7.6" fill="#343741" font-family='"Liberation Sans", sans-serif'>WIN-RFU3G9FRR90</text><circle cx="1245.3" cy="399.6" r="3.9" fill="#3fb0c0"/><text x="1253.5" y="402.2" font-size="7.6" fill="#343741" font-family='"Liberation Sans", sans-serif'>siempqr</text></svg>
</body></html>
